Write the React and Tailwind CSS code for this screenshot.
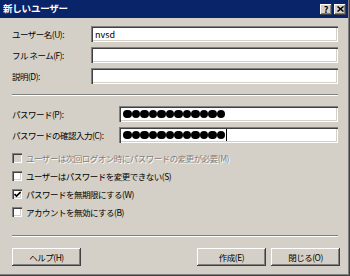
import React from 'react';

const FONT = { fontFamily: '"Noto Sans CJK JP", "Noto Sans", sans-serif' };

const sunken =
  'bg-white shadow-[inset_1px_1px_#808080,inset_2px_2px_#404040,inset_-1px_-1px_#ffffff,inset_-2px_-2px_#d4d0c8]';
const raised =
  'bg-[#d4d0c8] shadow-[inset_-1px_-1px_#404040,inset_1px_1px_#ffffff,inset_-2px_-2px_#808080,inset_2px_2px_#d4d0c8]';

function Field({ label, labelWidth, children }) {
  return (
    <div className="flex items-center h-[16px]">
      <span className="shrink-0 text-[8.5px] tracking-[-0.5px] text-black leading-none" style={{ width: labelWidth }}>
        {label}
      </span>
      <div className={`flex-1 h-[16px] flex items-center pl-[4px] ${sunken}`}>{children}</div>
    </div>
  );
}

function Dots({ cursor }) {
  return (
    <div className="flex items-center">
      {Array.from({ length: 12 }).map((_, i) => (
        <div key={i} className="w-[8.5px] h-[8.5px] rounded-full bg-black" />
      ))}
      {cursor && <div className="ml-[1px] w-px h-[12px] bg-black" />}
    </div>
  );
}

function Check({ label, checked, disabled }) {
  return (
    <div className="flex items-center h-[18px] gap-[4px]">
      <div
        className={`w-[10px] h-[10px] flex items-center justify-center ${
          disabled ? 'bg-[#d4d0c8]' : 'bg-white'
        } shadow-[inset_1px_1px_#808080,inset_2px_2px_#404040,inset_-1px_-1px_#ffffff,inset_-2px_-2px_#d4d0c8]`}
      >
        {checked && (
          <svg width="7" height="7" viewBox="0 0 7 7">
            <path d="M0.5 3 L2.5 5 L6.5 1" stroke="#000" strokeWidth="1.6" fill="none" />
          </svg>
        )}
      </div>
      <span
        className={`text-[8.5px] tracking-[-0.5px] leading-none ${
          disabled ? 'text-[#808080] [text-shadow:1px_1px_#ffffff]' : 'text-black'
        }`}
      >
        {label}
      </span>
    </div>
  );
}

function Sep() {
  return (
    <div>
      <div className="h-px bg-[#808080]" />
      <div className="h-px bg-white" />
    </div>
  );
}

function Button({ children, className = '' }) {
  return (
    <div className={`w-[69px] h-[18px] flex items-center justify-center text-[8.5px] tracking-[-0.5px] text-black ${raised} ${className}`}>
      {children}
    </div>
  );
}

export default function App() {
  return (
    <div
      className="w-[350px] h-[276px] bg-[#d4d0c8] flex flex-col shadow-[inset_-1px_-1px_#404040,inset_-2px_-2px_#808080] overflow-hidden"
      style={FONT}
    >
      {/* title bar */}
      <div className="h-[18px] w-[348px] bg-[#0a246a] flex items-center pl-[3px] pr-[2px]">
        <span className="text-white font-bold text-[9.5px] tracking-[-0.2px] leading-none">新しいユーザー</span>
        <div className="ml-auto flex gap-[2px]">
          <div className={`w-[12px] h-[11px] flex items-center justify-center text-[9px] font-bold leading-none text-black ${raised}`}>
            ?
          </div>
          <div className={`w-[12px] h-[11px] flex items-center justify-center ${raised}`}>
            <svg width="7" height="6" viewBox="0 0 7 6">
              <path d="M0.5 0.5 L6.5 5.5 M6.5 0.5 L0.5 5.5" stroke="#000" strokeWidth="1.5" />
            </svg>
          </div>
        </div>
      </div>

      <div className="px-[12px] flex flex-col">
        <div className="mt-[8px] flex flex-col gap-[5px]">
          <Field label="ユーザー名(U):" labelWidth={79}>
            <span className="text-[9px] leading-none text-black">nvsd</span>
          </Field>
          <Field label="フル ネーム(F):" labelWidth={79} />
          <Field label="説明(D):" labelWidth={79} />
        </div>

        <div className="mt-[10px]">
          <Sep />
        </div>

        <div className="mt-[10px] flex flex-col gap-[5px]">
          <Field label="パスワード(P):" labelWidth={107}>
            <Dots />
          </Field>
          <Field label="パスワードの確認入力(C):" labelWidth={107}>
            <Dots cursor />
          </Field>
        </div>

        <div className="mt-[6px] flex flex-col">
          <Check label="ユーザーは次回ログオン時にパスワードの変更が必要(M)" disabled />
          <Check label="ユーザーはパスワードを変更できない(S)" />
          <Check label="パスワードを無期限にする(W)" checked />
          <Check label="アカウントを無効にする(B)" />
        </div>

        <div className="mt-[14px]">
          <Sep />
        </div>

        <div className="mt-[11px] flex items-center -mr-[2px]">
          <Button>ヘルプ(H)</Button>
          <Button className="ml-auto">作成(E)</Button>
          <Button className="ml-[5px]">閉じる(O)</Button>
        </div>
      </div>
    </div>
  );
}
